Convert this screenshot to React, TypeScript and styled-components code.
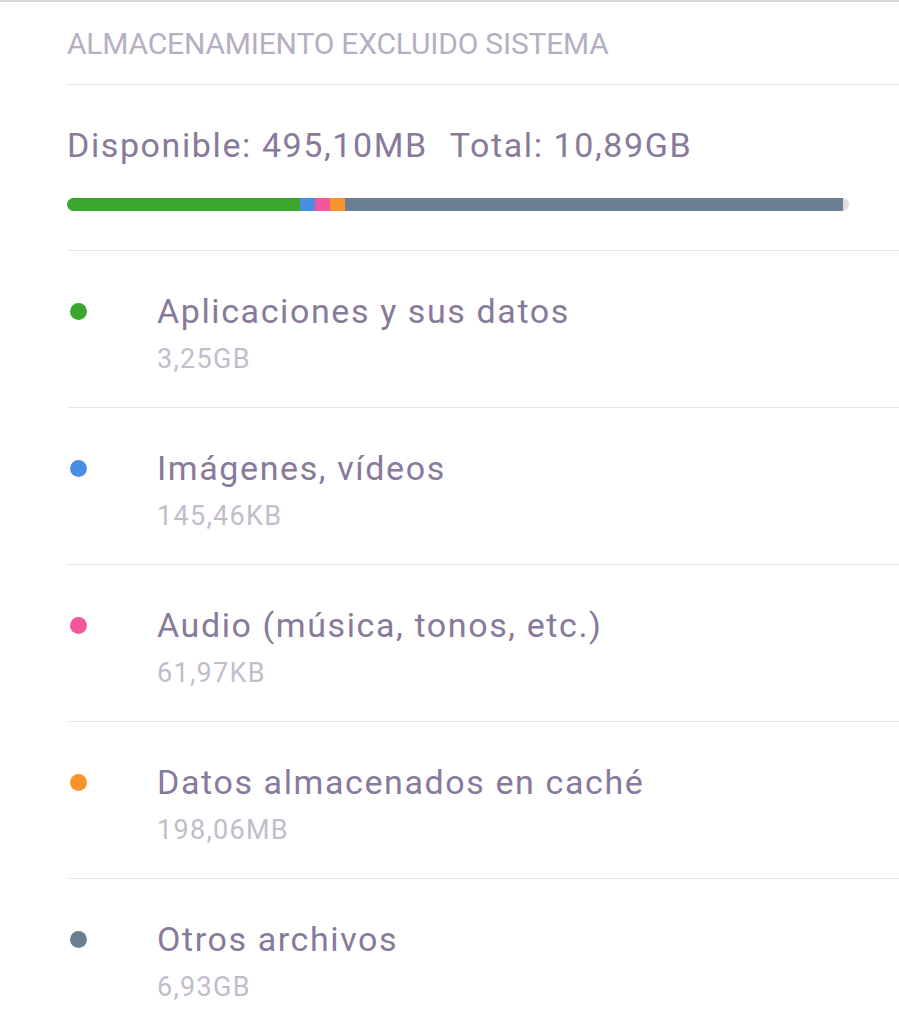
import React from "react";
import styled, { createGlobalStyle } from "styled-components";

const GlobalStyle = createGlobalStyle`
  html, body {
    margin: 0;
    padding: 0;
    background: #ffffff;
    font-family: Roboto, "Noto Sans", sans-serif;
  }
`;

interface Category {
  name: string;
  size: string;
  bytes: number;
  color: string;
}

const TOTAL = 10.89 * 1024;

const categories: Category[] = [
  { name: "Aplicaciones y sus datos", size: "3,25GB", bytes: 3.25 * 1024, color: "#3aa62b" },
  { name: "Imágenes, vídeos", size: "145,46KB", bytes: 0.14, color: "#4a8ee2" },
  { name: "Audio (música, tonos, etc.)", size: "61,97KB", bytes: 0.06, color: "#f2579b" },
  { name: "Datos almacenados en caché", size: "198,06MB", bytes: 198.06, color: "#f7942c" },
  { name: "Otros archivos", size: "6,93GB", bytes: 6.93 * 1024, color: "#6b7f93" },
];

const Page = styled.div`
  border-top: 2px solid #d9d7dd;
  min-height: 1021px;
`;

const Header = styled.div`
  margin-left: 67px;
  height: 82px;
  display: flex;
  align-items: center;
  border-bottom: 1px solid #e8e6ea;
`;

const HeaderText = styled.span`
  font-size: 30px;
  color: #b6aec2;
  letter-spacing: -0.2px;
  white-space: nowrap;
`;

const Summary = styled.div`
  margin-left: 67px;
  padding: 40px 50px 39px 0;
  border-bottom: 1px solid #e8e6ea;
`;

const Totals = styled.div`
  font-size: 34px;
  line-height: 41px;
  letter-spacing: 1.6px;
  color: #877a9a;
  display: flex;
  gap: 22px;
  white-space: nowrap;
`;

const Bar = styled.div`
  margin-top: 32px;
  height: 13px;
  border-radius: 7px;
  background: #dcdde1;
  display: flex;
  overflow: hidden;
`;

const Segment = styled.div<{ $color: string }>`
  height: 100%;
  background: ${(p) => p.$color};
`;

const Row = styled.div<{ $last?: boolean }>`
  margin-left: 67px;
  height: 157px;
  box-sizing: border-box;
  padding-top: 39px;
  display: flex;
  border-bottom: ${(p) => (p.$last ? "none" : "1px solid #e8e6ea")};
`;

const DotCell = styled.div`
  width: 90px;
  height: 43px;
  display: flex;
  align-items: center;
  flex-shrink: 0;
`;

const Dot = styled.span<{ $color: string }>`
  width: 17px;
  height: 17px;
  margin-left: 3px;
  border-radius: 50%;
  background: ${(p) => p.$color};
`;

const Texts = styled.div`
  display: flex;
  flex-direction: column;
`;

const Title = styled.div`
  font-size: 34px;
  line-height: 43px;
  letter-spacing: 1.6px;
  color: #877a9a;
  white-space: nowrap;
`;

const Sub = styled.div`
  margin-top: 10px;
  font-size: 27px;
  line-height: 32px;
  letter-spacing: 1.3px;
  color: #c3bccb;
`;

export default function App() {
  const minW = 15;
  return (
    <Page>
      <GlobalStyle />
      <Header>
        <HeaderText>ALMACENAMIENTO EXCLUIDO SISTEMA</HeaderText>
      </Header>
      <Summary>
        <Totals>
          <span>Disponible: 495,10MB</span>
          <span>Total: 10,89GB</span>
        </Totals>
        <Bar>
          {categories.map((c) => (
            <Segment
              key={c.name}
              $color={c.color}
              style={{ width: `max(${minW}px, ${((c.bytes / TOTAL) * 100).toFixed(2)}%)` }}
            />
          ))}
        </Bar>
      </Summary>
      {categories.map((c, i) => (
        <Row key={c.name} $last={i === categories.length - 1}>
          <DotCell>
            <Dot $color={c.color} />
          </DotCell>
          <Texts>
            <Title>{c.name}</Title>
            <Sub>{c.size}</Sub>
          </Texts>
        </Row>
      ))}
    </Page>
  );
}
